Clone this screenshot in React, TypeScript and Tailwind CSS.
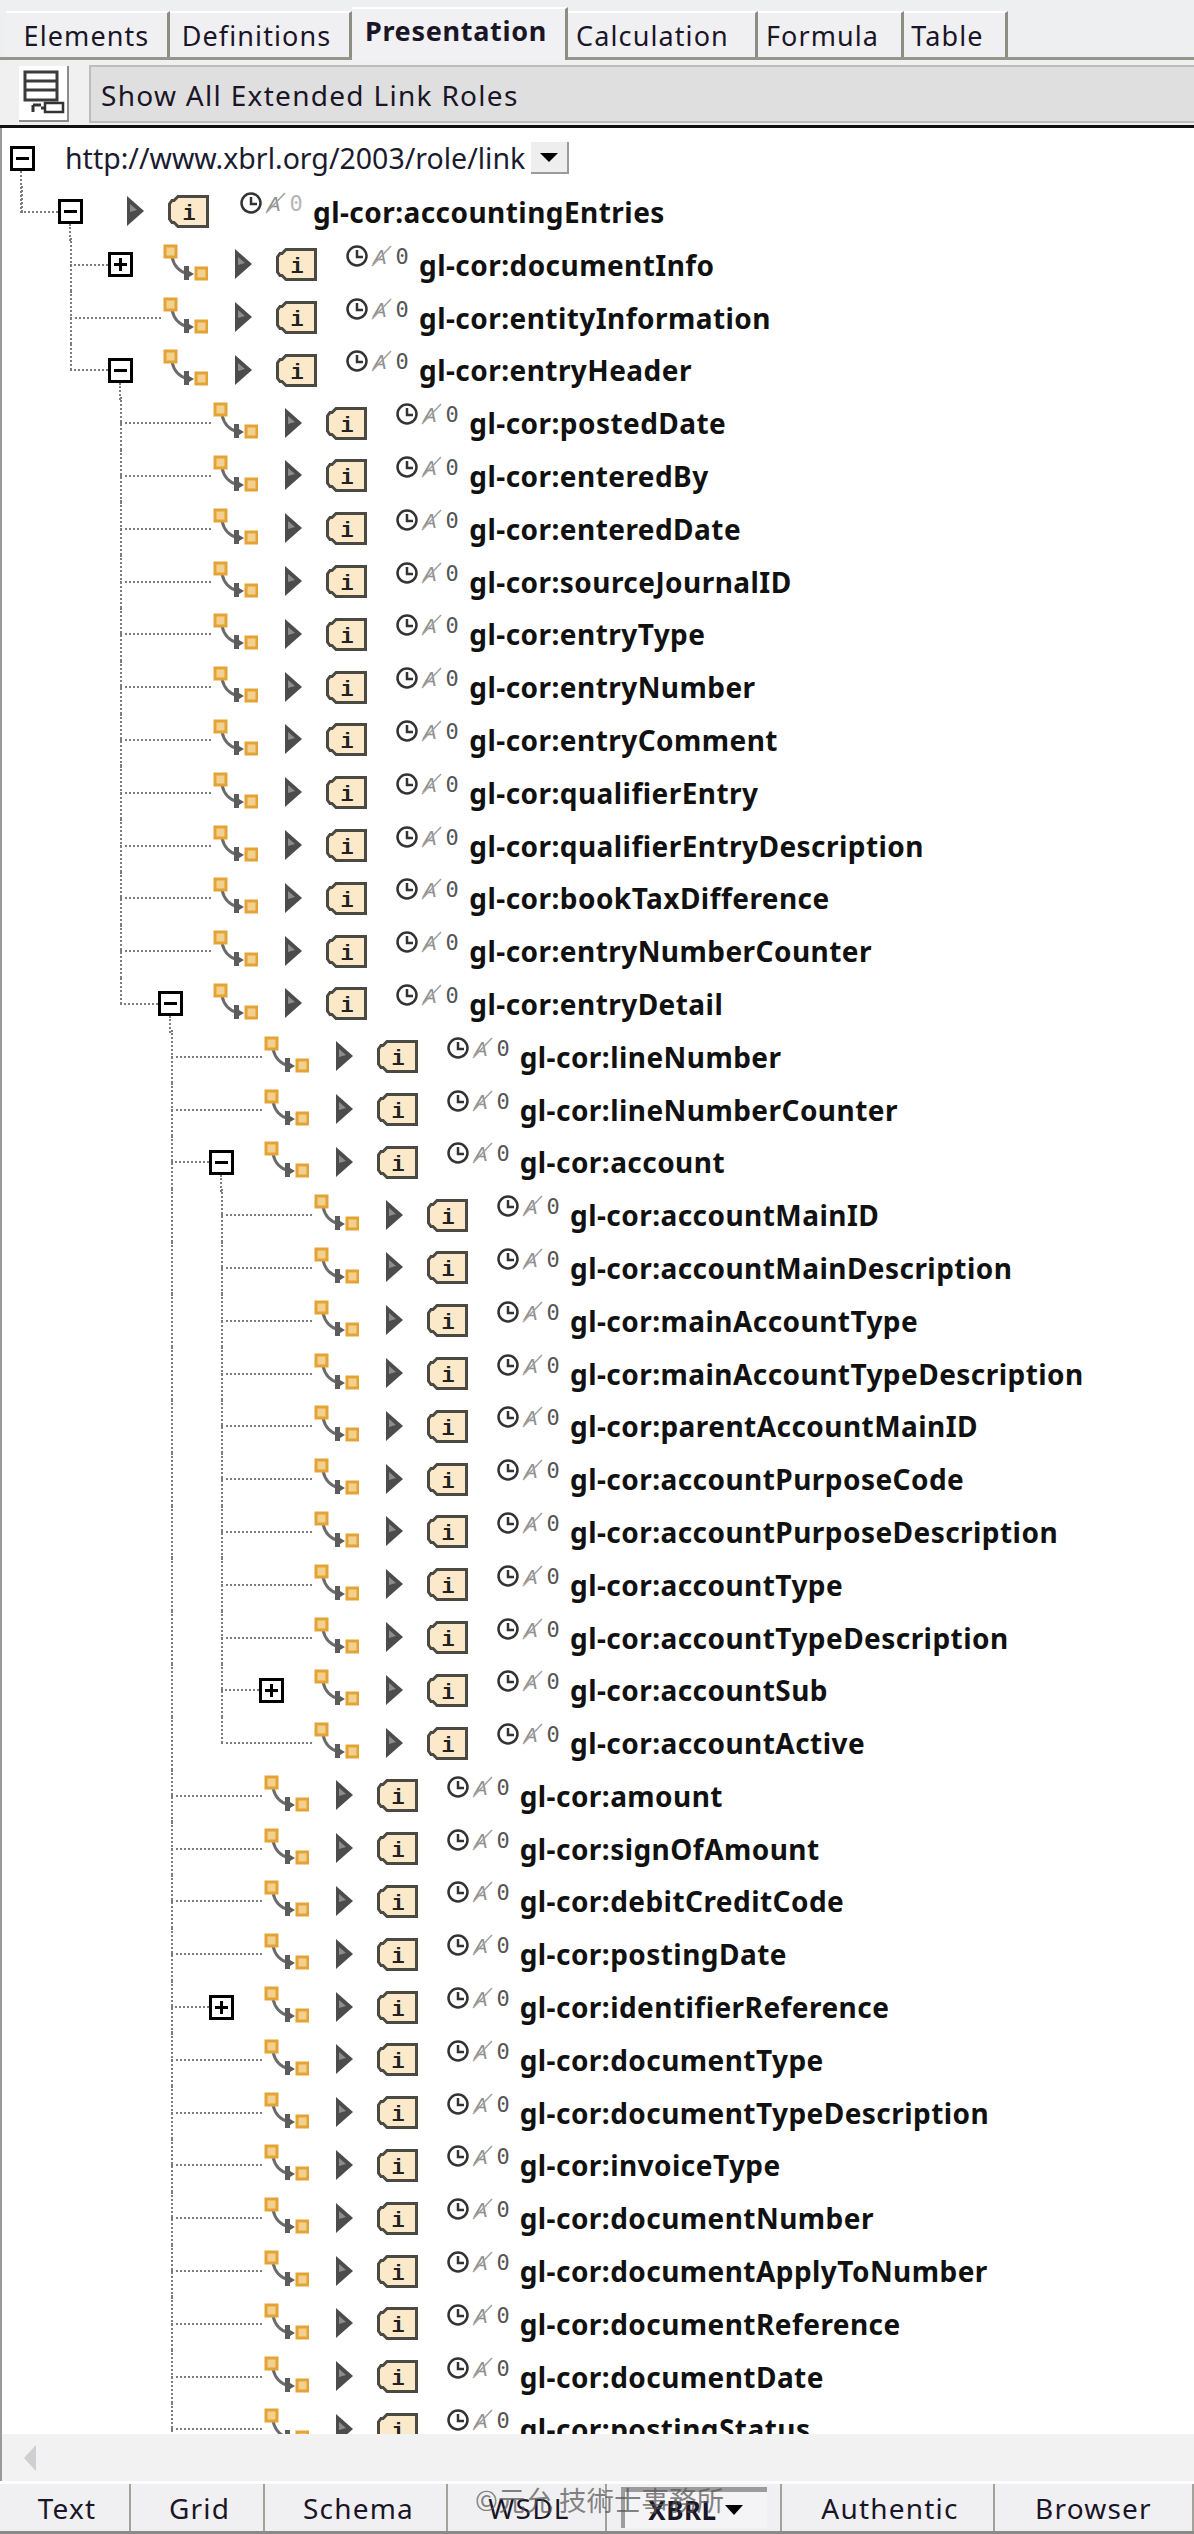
import React from 'react';

const FONT = "font-['Noto_Sans','Open_Sans',sans-serif]";

type Node = [string, number, ('plus' | 'minus')?];

const rows: Node[] = [
    ['accountingEntries', 0, 'minus'],
    ['documentInfo', 1, 'plus'],
    ['entityInformation', 1],
    ['entryHeader', 1, 'minus'],
    ['postedDate', 2],
    ['enteredBy', 2],
    ['enteredDate', 2],
    ['sourceJournalID', 2],
    ['entryType', 2],
    ['entryNumber', 2],
    ['entryComment', 2],
    ['qualifierEntry', 2],
    ['qualifierEntryDescription', 2],
    ['bookTaxDifference', 2],
    ['entryNumberCounter', 2],
    ['entryDetail', 2, 'minus'],
    ['lineNumber', 3],
    ['lineNumberCounter', 3],
    ['account', 3, 'minus'],
    ['accountMainID', 4],
    ['accountMainDescription', 4],
    ['mainAccountType', 4],
    ['mainAccountTypeDescription', 4],
    ['parentAccountMainID', 4],
    ['accountPurposeCode', 4],
    ['accountPurposeDescription', 4],
    ['accountType', 4],
    ['accountTypeDescription', 4],
    ['accountSub', 4, 'plus'],
    ['accountActive', 4],
    ['amount', 3],
    ['signOfAmount', 3],
    ['debitCreditCode', 3],
    ['postingDate', 3],
    ['identifierReference', 3, 'plus'],
    ['documentType', 3],
    ['documentTypeDescription', 3],
    ['invoiceType', 3],
    ['documentNumber', 3],
    ['documentApplyToNumber', 3],
    ['documentReference', 3],
    ['documentDate', 3],
    ['postingStatus', 3],
];

// does the guide at this level carry on below row i (the list is cut off at level 3)
const hasNext = (i: number, level: number) => {
    for (let j = i + 1; j < rows.length; j++) {
        if (rows[j][1] < level) return false;
        if (rows[j][1] === level) return true;
    }
    return level === 3;
};

const topTabs = [
    { label: 'Elements', w: 'w-[164px]' },
    { label: 'Definitions', w: 'w-[182px] pr-[6px]' },
    { label: 'Presentation', w: 'w-[216px] pr-[5px]', active: true },
    { label: 'Calculation', w: 'w-[190px] pr-[18px]' },
    { label: 'Formula', w: 'w-[146px] pr-[14px]' },
    { label: 'Table', w: 'w-[104px] pr-[14px]' },
];

const bottomTabs = [
    { label: 'Text', w: 'w-[131px] pl-[5px]' },
    { label: 'Grid', w: 'w-[134px] pl-[5px]' },
    { label: 'Schema', w: 'w-[183px] pl-[6px]' },
    { label: 'WSDL', w: 'w-[159px] pl-[5px]' },
    { label: 'XBRL', w: 'w-[175px]', active: true },
    { label: 'Authentic', w: 'w-[213px] pl-[5px]' },
    { label: 'Browser', w: 'w-[199px]' },
];

const ExpandBox: React.FC<{ kind: 'plus' | 'minus'; stem?: boolean }> = ({ kind, stem }) => (
    <div className="relative w-[25px] h-[25px] shrink-0 border-[3px] border-black bg-white flex items-center justify-center">
        <div className="w-[13px] h-[3px] bg-black" />
        {kind === 'plus' && <div className="absolute w-[3px] h-[13px] bg-black" />}
        {stem && <div className="absolute left-[8px] top-[22px] h-[17px] border-l-2 border-dotted border-[#7d7d7d]" />}
    </div>
);

const Connector = () => (
    <svg width="45" height="38" viewBox="0 0 45 38" className="shrink-0 -mt-[4px]">
        <path d="M9 13 C11 22 17 28 25 30" fill="none" stroke="#6b6b6b" strokeWidth="3" />
        <path d="M21 22 L26 22 L26 27 L31 30 L26 33 L26 36 L21 36 Z" fill="#5c5c5c" />
        <rect x="2" y="2" width="11" height="11" fill="#f2d08f" stroke="#e3a435" strokeWidth="3" />
        <rect x="33" y="24" width="11" height="11" fill="#f2d08f" stroke="#e3a435" strokeWidth="3" />
    </svg>
);

const Arrow = () => (
    <svg width="17" height="30" viewBox="0 0 17 30" className="shrink-0 -mt-[1px]">
        <path d="M0 0 L17 15 L0 30 Z" fill="#4c4c4c" />
        <path d="M3 8 L10 14 L3 16 Z" fill="#8c8c8c" />
    </svg>
);

const ItemIcon = () => (
    <svg width="41" height="33" viewBox="0 0 41 33" className="shrink-0">
        <path d="M10 1.5 H39.5 V31.5 H10 L6 27.5 H4 L1.5 24 V9 L4 5.5 H6 Z" fill="#fbe9c9" stroke="#4b4a42" strokeWidth="3" />
        <text x="21" y="25" textAnchor="middle" fontSize="22" fontWeight="700" fontFamily="'Liberation Mono', monospace" fill="#222">i</text>
    </svg>
);

const Flags: React.FC<{ faint?: boolean }> = ({ faint }) => (
    <svg width="62" height="24" viewBox="0 0 62 24" className="shrink-0 -mt-[18px]">
        <circle cx="11" cy="12" r="9.5" fill="none" stroke="#333" strokeWidth="2.5" />
        <path d="M11 6 V13 H17" fill="none" stroke="#333" strokeWidth="2.5" />
        <text x="34" y="20" textAnchor="middle" fontSize="20" fontStyle="italic" fontFamily="'Liberation Sans', sans-serif" fill="#8f8f8f">A</text>
        <path d="M26 22 L45 2" stroke="#a0a0a0" strokeWidth="1.5" />
        <text x="56" y="20" textAnchor="middle" fontSize="22" fontFamily="'DejaVu Sans Mono', monospace" fill={faint ? '#b5b5b5' : '#555'}>0</text>
    </svg>
);

const TreeRow: React.FC<{ node: Node; index: number }> = ({ node, index }) => {
    const [name, level, box] = node;
    const cols = [];
    for (let k = 1; k < level; k++) {
        cols.push(
            <div key={k} className="w-[50.33px] shrink-0 self-stretch">
                {hasNext(index, k) && <div className="h-full border-l-2 border-dotted border-[#7d7d7d]" />}
            </div>,
        );
    }
    const root = level === 0;
    return (
        <div className={`flex items-center h-[52.8px] ${root ? 'pl-[19px]' : 'pl-[68px]'}`}>
            {cols}
            <div className={`relative flex items-center self-stretch shrink-0 ${root ? 'w-[106px]' : 'w-[93px]'}`}>
                <div className={`absolute left-0 top-0 border-l-2 border-dotted border-[#7d7d7d] ${hasNext(index, level) ? 'h-full' : 'h-1/2'}`} />
                {box ? (
                    <>
                        <div className={`border-t-2 border-dotted border-[#7d7d7d] ${root ? 'w-[37px]' : 'w-[38px]'}`} />
                        <ExpandBox kind={box} stem={box === 'minus'} />
                    </>
                ) : (
                    <div className="w-[91px] border-t-2 border-dotted border-[#7d7d7d]" />
                )}
            </div>
            {!root && <Connector />}
            <div className={root ? '' : 'ml-[27px] flex'}>
                <Arrow />
            </div>
            <div className="ml-[24px] flex">
                <ItemIcon />
            </div>
            <div className={`flex ${root ? 'ml-[31px]' : 'ml-[29px]'}`}>
                <Flags faint={root} />
            </div>
            <span className="ml-[11px] text-[28px] font-bold leading-none text-[#111] tracking-[0.45px] whitespace-nowrap">gl-cor:{name}</span>
        </div>
    );
};

export default function App() {
    return (
        <div className={`w-[1194px] h-[2534px] flex flex-col overflow-hidden bg-white ${FONT} text-[#1b1528]`}>
            {/* tabs */}
            <div className="h-[60px] shrink-0 flex items-end pl-[6px] bg-[#eeeff1] border-b-[3px] border-[#95958c]">
                {topTabs.map((t) => (
                    <div
                        key={t.label}
                        className={`flex items-center justify-center ${t.w} ${
                            t.active
                                ? 'h-[53px] -mb-[3px] pb-[6px] text-[27px] tracking-[0.7px] bg-[#f1f1f3] border-t-2 border-white border-r-[3px] border-r-[#8d8d84] font-bold'
                                : 'h-[46px] pt-[2px] text-[27px] tracking-[1.1px] bg-[#f0f0f2] border-t-2 border-white border-r-[3px] border-r-[#8d8d84]'
                        }`}
                    >
                        {t.label}
                    </div>
                ))}
            </div>

            {/* toolbar */}
            <div className="h-[68px] shrink-0 flex items-center bg-[#f0f0f0] pl-[19px] gap-[20px] pt-[2px] border-b-[3px] border-[#111]">
                <div className="w-[50px] h-[56px] bg-white border-r-2 border-b-2 border-[#8c8c8c] flex items-start justify-center pt-[4px]">
                    <svg width="44" height="46" viewBox="0 0 44 46">
                        <path d="M4 2 H36 V30 H4 Z M4 11 H36 M4 20 H36" fill="#fff" stroke="#3b3b3b" strokeWidth="3" />
                        <path d="M12 35 H20 M12 35 V42 M20 38 H26" fill="none" stroke="#333" strokeWidth="3" />
                        <rect x="24" y="33" width="18" height="9" fill="#fff" stroke="#333" strokeWidth="2.5" />
                    </svg>
                </div>
                <div className="flex-1 h-[58px] flex items-center pl-[10px] pt-[2px] bg-[#dfdfdf] border-2 border-[#bdbdbd] border-r-0 text-[28px] tracking-[1.3px]">
                    Show All Extended Link Roles
                </div>
            </div>

            {/* tree */}
            <div className="h-[2306px] shrink-0 overflow-hidden border-l-2 border-[#9a9a9a] bg-white">
                <div className="h-[57.6px] pt-[3px] flex items-center pl-[8px]">
                    <div className="relative">
                        <ExpandBox kind="minus" />
                        <div className="absolute left-[10px] top-[25px] h-[42px] border-l-2 border-dotted border-[#7d7d7d]" />
                    </div>
                    <span className="ml-[30px] text-[28.5px] leading-none text-[#1b1b30] whitespace-nowrap">http://www.xbrl.org/2003/role/link</span>
                    <div className="ml-[6px] w-[38px] h-[32px] bg-[#eeeeee] border-r-2 border-b-2 border-[#9b9b9b] flex items-center justify-center">
                        <div className="w-0 h-0 border-x-[9px] border-x-transparent border-t-[9px] border-t-black" />
                    </div>
                </div>
                {rows.map((node, i) => (
                    <TreeRow key={node[0]} node={node} index={i} />
                ))}
            </div>

            {/* scroll bar */}
            <div className="h-[47px] shrink-0 flex items-center pl-[22px] bg-[#f2f2f3] border-l-2 border-[#9a9a9a]">
                <div className="w-0 h-0 border-y-[13px] border-y-transparent border-r-[12px] border-r-[#cfcfd2]" />
            </div>

            {/* view tabs */}
            <div className="relative flex-1 flex bg-[#f0f0f2] border-t-[3px] border-white border-b-[3px] border-b-[#8a8a8a]">
                {bottomTabs.map((t) => (
                    <div key={t.label} className={`flex items-center justify-center border-r-2 border-[#a3a39b] text-[28px] tracking-[1.2px] ${t.w}`}>
                        {t.active ? (
                            <div className="w-[146px] h-[41px] flex items-center justify-center gap-[8px] border-t-[5px] border-l-[4px] border-[#9c9c9c] bg-[#f4f4f6] text-[26px] font-bold tracking-[0.5px]">
                                {t.label}
                                <div className="w-0 h-0 border-x-[9px] border-x-transparent border-t-[10px] border-t-black" />
                            </div>
                        ) : (
                            t.label
                        )}
                    </div>
                ))}
                <div className="absolute left-[475px] -top-[3px] text-[27.5px] leading-[36px] text-[#555555b8] font-['Noto_Sans_CJK_TC','Noto_Sans',sans-serif] whitespace-nowrap">
                    ©元允 技術士事務所
                </div>
            </div>
        </div>
    );
}
